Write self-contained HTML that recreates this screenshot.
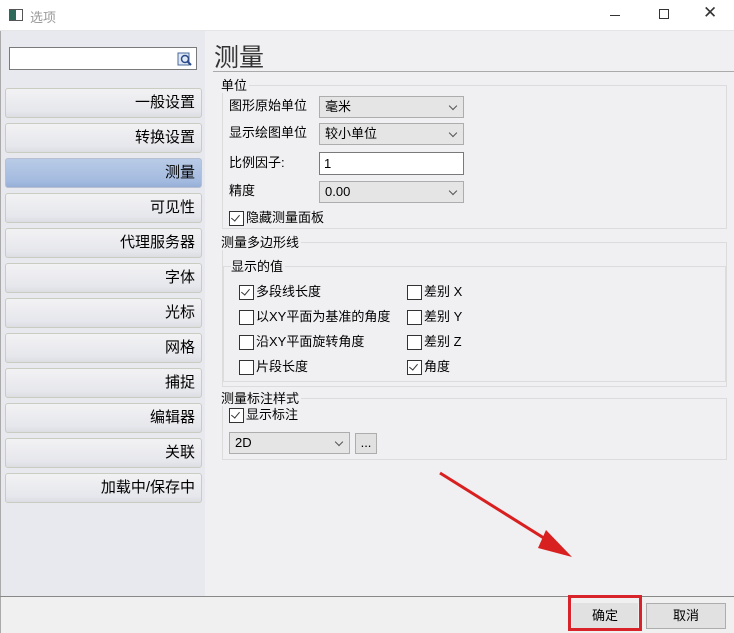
<!DOCTYPE html>
<html><head><meta charset="utf-8"><style>
*{margin:0;padding:0;box-sizing:border-box}
body{width:734px;height:633px;position:relative;overflow:hidden;background:#f0eff2;font-family:"Liberation Sans","Noto Sans CJK SC",sans-serif;font-size:13px;color:#000}
.a{position:absolute}
.title{left:0;top:0;width:734px;height:31px;background:#fff;border-bottom:1px solid #e5e5e5}
.left{left:0;top:31px;width:205px;height:565px;background:#e8e9ee;border-left:1px solid #aaa}
.nb{position:absolute;left:5px;width:197px;height:30px;border:1px solid #c9ccc0;border-radius:3px;background:linear-gradient(#f2f2f4,#e6e7ec 80%,#dcdde2);text-align:right;padding-right:6px;font-size:15px;line-height:28px;font-weight:normal}
.nb.sel{background:linear-gradient(#b9cbe6,#a3badf 80%,#96aed6);border-color:#b6c0d2}
.gb{position:absolute;border:1px solid #dcdcdc}
.gl{position:absolute;background:#f0eff2;font-size:13px;line-height:15px;padding-right:2px}
.lbl{position:absolute;font-size:13px}
.cb{position:absolute;height:22px;background:#e5e5e5;border:1px solid #adadad;padding-left:5px;line-height:20px;font-size:13px}
.cb:after{content:"";position:absolute;right:7px;top:6px;width:5px;height:5px;border-right:1px solid #555;border-bottom:1px solid #555;transform:rotate(45deg)}
.ck{position:absolute;font-size:13px;line-height:15px;padding-left:17px}
.ck:before{content:"";position:absolute;left:0;top:1px;width:13px;height:13px;border:1px solid #333;background:#fff}
.ck.on:after{content:"";position:absolute;left:4px;top:3px;width:4px;height:7px;border-right:1.5px solid #333;border-bottom:1.5px solid #333;transform:rotate(40deg)}
.btn{position:absolute;height:26px;border:1px solid #adadad;background:#e1e1e1;text-align:center;line-height:24px;font-size:13px}
</style></head><body>
<div class="a title">
 <div class="a" style="left:9px;top:9px;width:14px;height:12px;border:1px solid #555;background:#fff"><div style="width:6px;height:10px;background:#2e6a5a"></div></div>
 <div class="a" style="left:30px;top:7px;color:#999;font-size:13px">选项</div>
 <div class="a" style="left:610px;top:15px;width:10px;height:1px;background:#333"></div>
 <div class="a" style="left:659px;top:9px;width:10px;height:10px;border:1px solid #333"></div>
 <div class="a" style="left:703px;top:3px;font-size:17px;color:#333">✕</div>
</div>
<div class="a left"></div>
<div class="a" style="left:9px;top:47px;width:188px;height:23px;background:#fff;border:1px solid #7a7a7a">
 <svg class="a" style="right:3px;top:3px" width="16" height="16"><rect x="1" y="2" width="11" height="12" fill="#dfe8f5" stroke="#4a6a9a"/><circle cx="8" cy="8" r="3.5" fill="none" stroke="#2a4a8a" stroke-width="1.5"/><line x1="10.5" y1="10.5" x2="14" y2="14" stroke="#2a4a8a" stroke-width="2"/></svg>
</div>
<div class="nb" style="top:88px">一般设置</div>
<div class="nb" style="top:123px">转换设置</div>
<div class="nb sel" style="top:158px">测量</div>
<div class="nb" style="top:193px">可见性</div>
<div class="nb" style="top:228px">代理服务器</div>
<div class="nb" style="top:263px">字体</div>
<div class="nb" style="top:298px">光标</div>
<div class="nb" style="top:333px">网格</div>
<div class="nb" style="top:368px">捕捉</div>
<div class="nb" style="top:403px">编辑器</div>
<div class="nb" style="top:438px">关联</div>
<div class="nb" style="top:473px">加载中/保存中</div>

<div class="a" style="left:214px;top:38px;font-size:25px;color:#333">测量</div>
<div class="a" style="left:213px;top:71px;width:521px;height:1px;background:#aaa"></div>

<div class="gb" style="left:222px;top:85px;width:505px;height:144px"></div>
<div class="gl" style="left:221px;top:78px">单位</div>
<div class="lbl" style="left:229px;top:95px">图形原始单位</div>
<div class="cb" style="left:319px;top:96px;width:145px">毫米</div>
<div class="lbl" style="left:229px;top:122px">显示绘图单位</div>
<div class="cb" style="left:319px;top:123px;width:145px">较小单位</div>
<div class="lbl" style="left:229px;top:152px">比例因子:</div>
<div class="a" style="left:319px;top:152px;width:145px;height:23px;background:#fff;border:1px solid #7a7a7a;padding-left:4px;line-height:21px">1</div>
<div class="lbl" style="left:229px;top:180px">精度</div>
<div class="cb" style="left:319px;top:181px;width:145px">0.00</div>
<div class="ck on" style="left:229px;top:210px">隐藏测量面板</div>

<div class="gb" style="left:222px;top:242px;width:505px;height:145px"></div>
<div class="gl" style="left:221px;top:235px">测量多边形线</div>
<div class="gb" style="left:223px;top:266px;width:503px;height:116px"></div>
<div class="gl" style="left:231px;top:259px">显示的值</div>
<div class="ck on" style="left:239px;top:284px">多段线长度</div>
<div class="ck" style="left:239px;top:309px">以XY平面为基准的角度</div>
<div class="ck" style="left:239px;top:334px">沿XY平面旋转角度</div>
<div class="ck" style="left:239px;top:359px">片段长度</div>
<div class="ck" style="left:407px;top:284px">差别 X</div>
<div class="ck" style="left:407px;top:309px">差别 Y</div>
<div class="ck" style="left:407px;top:334px">差别 Z</div>
<div class="ck on" style="left:407px;top:359px">角度</div>

<div class="gb" style="left:222px;top:398px;width:505px;height:62px"></div>
<div class="gl" style="left:221px;top:391px">测量标注样式</div>
<div class="ck on" style="left:229px;top:407px">显示标注</div>
<div class="cb" style="left:229px;top:432px;width:121px;height:22px">2D</div>
<div class="btn" style="left:355px;top:433px;width:22px;height:21px;line-height:17px">...</div>

<div class="a" style="left:205px;top:596px;width:529px;height:1px;background:#888"></div>
<div class="a" style="left:0;top:596px;width:205px;height:1px;background:#888"></div>
<div class="a" style="left:0;top:597px;width:734px;height:36px;background:#f0f0f0"></div>
<div class="a" style="left:0;top:597px;width:1px;height:36px;background:#aaa"></div>
<div class="btn" style="left:572px;top:603px;width:66px;height:26px;line-height:26px;border:none;background:#e1e1e1">确定</div>
<div class="btn" style="left:646px;top:603px;width:80px">取消</div>
<div class="a" style="left:568px;top:595px;width:74px;height:36px;border:3px solid #d9232a"></div>
<svg class="a" style="left:0;top:0" width="734" height="633"><line x1="440" y1="473" x2="555" y2="545" stroke="#d92020" stroke-width="3"/><polygon points="572,557 546,530 538,548" fill="#d92020"/></svg>
</body></html>
